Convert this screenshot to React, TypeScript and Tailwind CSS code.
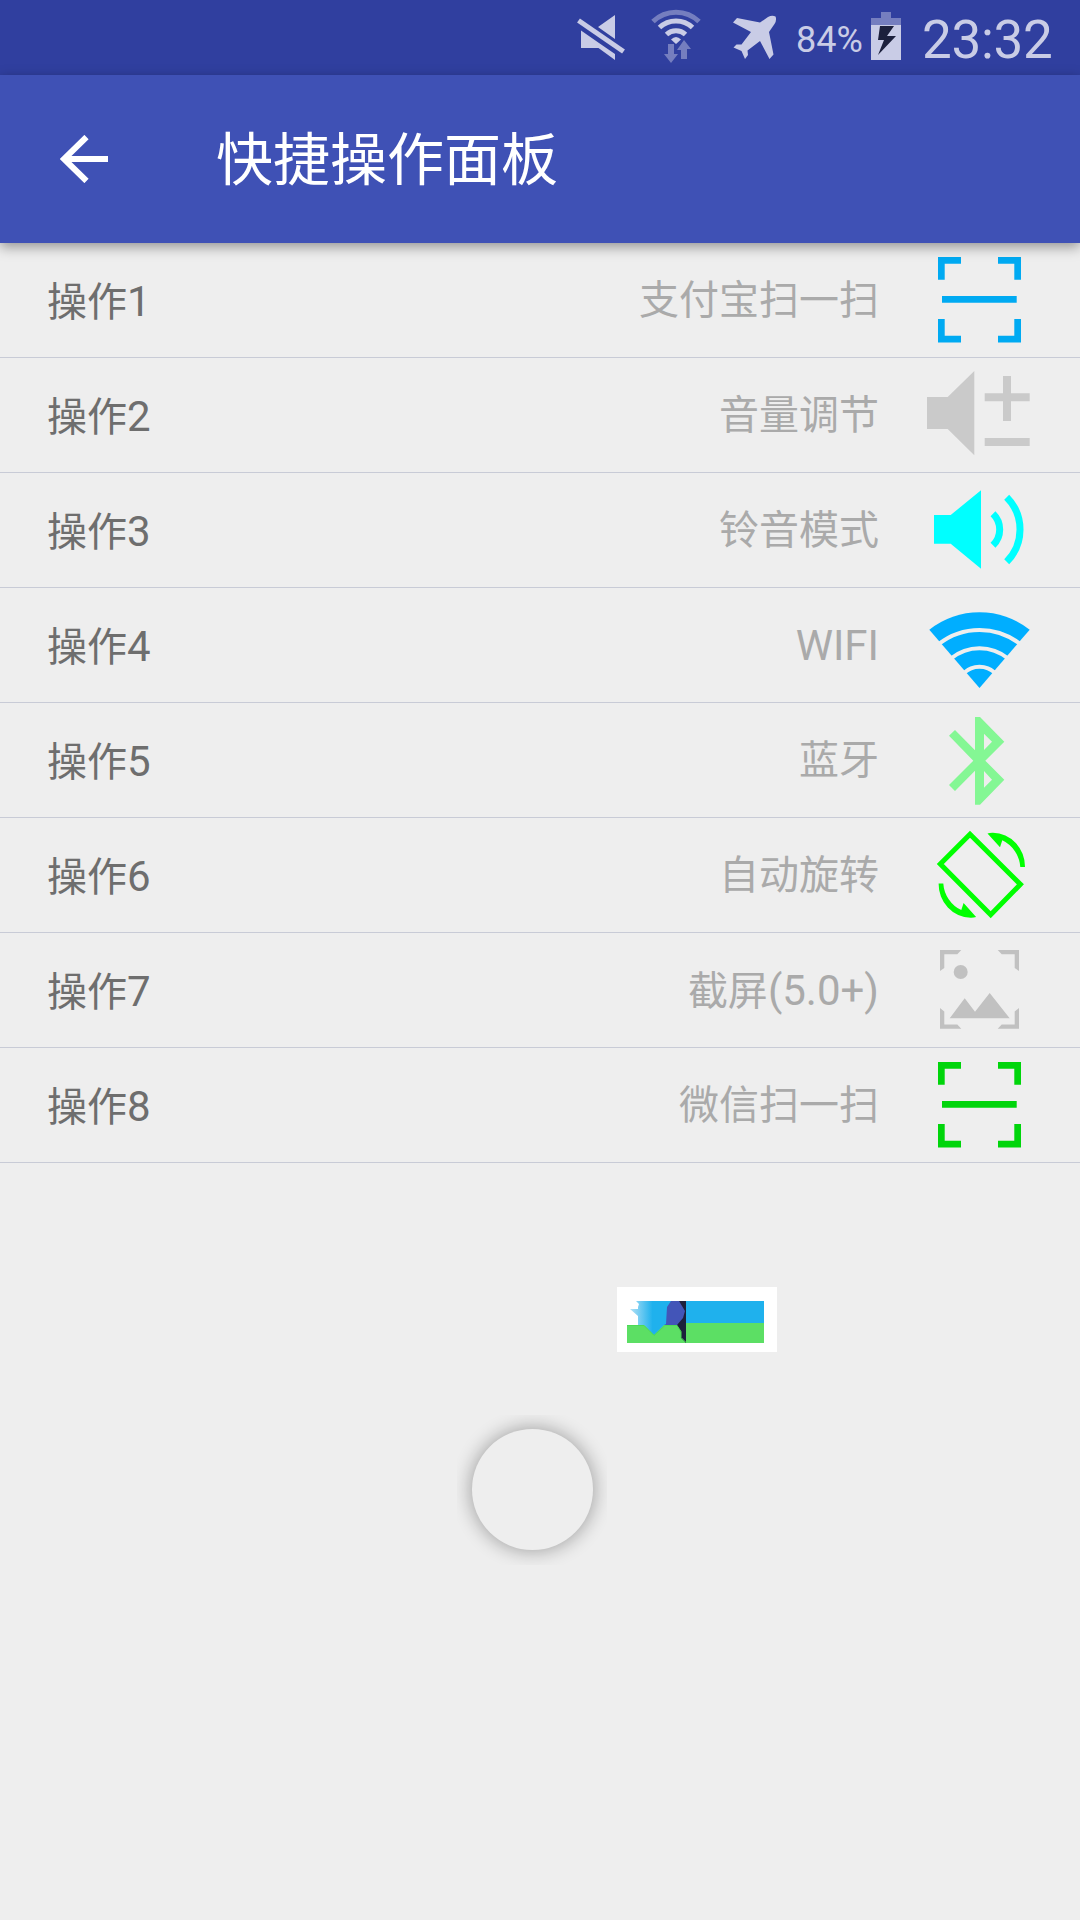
import type { ReactNode } from "react";

const ScanIcon = () => (
  <path d="M15 14h23v6.7H21.7V36.7H15zM75 14h23v22.7H91.3V20.7H75zM15 76h6.7v16.7H38v6.7H15zM91.3 76H98v23.4H75v-6.7h16.3zM19 53h74.7v6.7H19z" />
);

const actions: { label: string; value: string; color: string; icon: ReactNode }[] = [
  {
    label: "操作1",
    value: "支付宝扫一扫",
    color: "text-[#00aaf2]",
    icon: <ScanIcon />,
  },
  {
    label: "操作2",
    value: "音量调节",
    color: "text-[#cacaca]",
    icon: (
      <path d="M4 39h20.7L51.3 13v84.3L24.7 71H4zM61.7 35.3H80V18h8v17.3h18.7v8H88V63h-8V43.3H61.7zM61.7 80h45v8h-45z" />
    ),
  },
  {
    label: "操作3",
    value: "铃音模式",
    color: "text-[#00ffff]",
    icon: (
      <>
        <path d="M11 42h16.7L58 17.3v78.4L27.7 70.7H11z" />
        <g fill="none" stroke="currentColor" strokeWidth={7}>
          <path d="M70 40.7A22 22 0 0 1 70 72.3" />
          <path d="M83.7 24.3A45.6 45.6 0 0 1 83.7 88.7" />
        </g>
      </>
    ),
  },
  {
    label: "操作4",
    value: "WIFI",
    color: "text-[#00aeff]",
    icon: (
      <>
        <path d="M6.3 41.7A81 81 0 0 1 106.7 41.7L56.5 100z" />
        <g fill="none" stroke="#eeeeee" strokeWidth={4}>
          <path d="M15.7 56A66 66 0 0 1 97.3 56" />
          <path d="M28.2 70.3A44.5 44.5 0 0 1 84.8 70.3" />
          <path d="M40.9 84.9A23 23 0 0 1 72.1 84.9" />
        </g>
      </>
    ),
  },
  {
    label: "操作5",
    value: "蓝牙",
    color: "text-[#84f794]",
    icon: (
      <path
        fillRule="evenodd"
        d="M52 14h5l24.3 24.7-19 19 19 19L57 101.7h-5V67.7L32 88l-6-6 24.3-24.3L26 32.7 32 27l20 20.3zM61 30.7V47l8-8.3zM61 68v16.7l8-8z"
      />
    ),
  },
  {
    label: "操作6",
    value: "自动旋转",
    color: "text-[#00ff00]",
    icon: (
      <>
        <path
          d="M47 16.3 17.3 46l50.4 50.7 29.7-30.4z"
          fill="none"
          stroke="currentColor"
          strokeWidth={5}
        />
        <path d="M64.5 15.5Q67 14.6 70 14.7A32.5 34 0 0 1 102 49h-4.7A32 32 0 0 0 79.3 22.3L77 29.3z" />
        <path
          d="M64.5 15.5Q67 14.6 70 14.7A32.5 34 0 0 1 102 49h-4.7A32 32 0 0 0 79.3 22.3L77 29.3z"
          transform="rotate(180 58.8 57.2)"
        />
      </>
    ),
  },
  {
    label: "操作7",
    value: "截屏(5.0+)",
    color: "text-[#c1c1c1]",
    icon: (
      <>
        <path d="M17 17h21.3l-4 4.3h-13V35L17 38zM96 17H74.7l4 4.3h13V35l4.3 3zM17 95.7h21.3l-4-4.3h-13V78.5L17 75zM96 95.7H74.7l4-4.3h13V78.5L96 75z" />
        <circle cx={37.7} cy={39} r={7} />
        <path d="M26.7 85.3l15-20L52 78.7 66.7 60l20 25.3z" />
      </>
    ),
  },
  {
    label: "操作8",
    value: "微信扫一扫",
    color: "text-[#00d50b]",
    icon: <ScanIcon />,
  },
];

// Latin runs are set slightly larger than the Chinese around them
function MixedText({ text }: { text: string }) {
  return text.split(/([\x21-\x7e]+)/).map((part, i) =>
    i % 2 ? (
      <span key={i} className="text-[42px]">
        {part}
      </span>
    ) : (
      part
    )
  );
}

function StatusBar() {
  return (
    <div className="flex h-[75px] bg-[#303f9f] text-[#c9cce6]">
      <svg width={220} height={75} className="ml-[570px] shrink-0" fill="currentColor">
        {/* Muted speaker */}
        <path d="M11 30.5 29 43 45 54v6L28.5 48H11zM28 27 45 15v24z" />
        <path d="M8.5 20.5 53.5 51.5" stroke="currentColor" strokeWidth={5} />
        {/* Wifi with traffic arrows */}
        <g fill="none" stroke="currentColor" strokeWidth={5}>
          <path d="M83 21.5A33 33 0 0 1 129 21.5" opacity={0.45} />
          <path d="M89.5 27.5A24 24 0 0 1 122.5 27.5" />
          <path d="M96.5 34.5A14 14 0 0 1 115.5 34.5" />
        </g>
        <path d="M101 39.5Q106 34.5 111 39.5L106 44z" />
        <g opacity={0.45}>
          <path d="M98 44h6v10h4L101 63l-7-9h4z" />
          <path d="M111 59V50H107l7-10 7 9h-4v10z" />
        </g>
        {/* Airplane */}
        <path d="M163 22.5 167 18l23 4.5 8-5.5q4-2 7.5-.5 1.5 3.5-1 7.5l-5.5 8 4.5 22.5L199.5 59 190 41l-12.5 9.5.5 4.5-3 4-3.5-8-8-3.5 3-3h5L181 32z" />
      </svg>
      <span className="mt-[17px] ml-[6px] w-[68px] text-[36px] leading-[46px]">84%</span>
      <svg width={32} height={75} className="ml-[6px] shrink-0" fill="currentColor">
        <path d="M1 18h10v-6h10v6h10v7H1z" opacity={0.45} />
        <path d="M1 25h30v35H1z" />
        <path d="M10 26h14l-7 10h9L8 55l6-15H8z" fill="#1c203c" />
      </svg>
      <span className="mt-[9px] ml-[20px] text-[53px] leading-[63px] tracking-[-0.3px]">23:32</span>
    </div>
  );
}

function Toolbar() {
  return (
    <header className="relative z-10 flex h-[168px] items-center bg-[#3f51b5] text-white shadow-[0_4px_12px_rgba(0,0,0,0.38)]">
      <svg width={48} height={48} viewBox="0 0 48 48" className="ml-[60px]">
        <path
          d="M26.5 2 4 24l22.5 22M4 24h44"
          fill="none"
          stroke="currentColor"
          strokeWidth={6}
        />
      </svg>
      <h1 className="ml-[108px] pt-1 text-[57px] leading-[66px]">快捷操作面板</h1>
    </header>
  );
}

function ActionList() {
  return (
    <ul>
      {actions.map(({ label, value, color, icon }) => (
        <li
          key={label}
          className="flex h-[115px] items-center border-b border-[#c8cbd6] pr-[43px] pl-[47px] text-[40px] leading-[60px]"
        >
          <span className="flex-1 pt-1 text-[#6e6e6e]">
            <MixedText text={label} />
          </span>
          <span className="pt-0.5 text-[#aaaaaa]">
            <MixedText text={value} />
          </span>
          <svg
            width={114}
            height={114}
            viewBox="0 0 114 114"
            fill="currentColor"
            className={`ml-[44px] ${color}`}
          >
            {icon}
          </svg>
        </li>
      ))}
    </ul>
  );
}

// Small preview strip that floats over the list
function FloatingPreview() {
  return (
    <div className="absolute top-[1287px] left-[617px] h-[65px] w-[160px] bg-white">
      <svg width={160} height={65}>
        <defs>
          <linearGradient id="splash" x1="0" x2="1" y1="0" y2="0">
            <stop offset="0" stopColor="#b4e1f6" />
            <stop offset="0.55" stopColor="#1fb1ed" />
          </linearGradient>
        </defs>
        <path d="M10 38h59v18H10zM69 36h78v20H69z" fill="#5cdf64" />
        <path d="M69 14h78v22H69z" fill="#1fb1ed" />
        <path d="M61 14h8v42l-5-5v-6l-4-7z" fill="#1c203c" />
        <path d="M47 14h15l6 10-2 7-6 7H47z" fill="#4355b8" />
        <path
          d="M19 14h35l-4 6-1 17-2 1L37 48 27 38h-6v-9l-8-7h8v-2l1-3z"
          fill="url(#splash)"
        />
        <path d="M10 38.5h17l10 10 11-10h12l4 6v6l5 5" fill="none" stroke="#4cdb55" />
      </svg>
    </div>
  );
}

function TouchButton() {
  return (
    <div className="absolute top-[1415px] left-[457px] size-[150px] overflow-hidden pt-[14px] pl-[14.5px]">
      <div className="size-[121px] rounded-full bg-[#eeeeee] shadow-[0_0_18px_2px_rgba(0,0,0,0.3)]" />
    </div>
  );
}

export default function App() {
  return (
    <div className="relative h-[1920px] w-[1080px] overflow-hidden bg-[#eeeeee] font-[Roboto,'Noto_Sans_CJK_SC',sans-serif]">
      <StatusBar />
      <Toolbar />
      <ActionList />
      <FloatingPreview />
      <TouchButton />
    </div>
  );
}
